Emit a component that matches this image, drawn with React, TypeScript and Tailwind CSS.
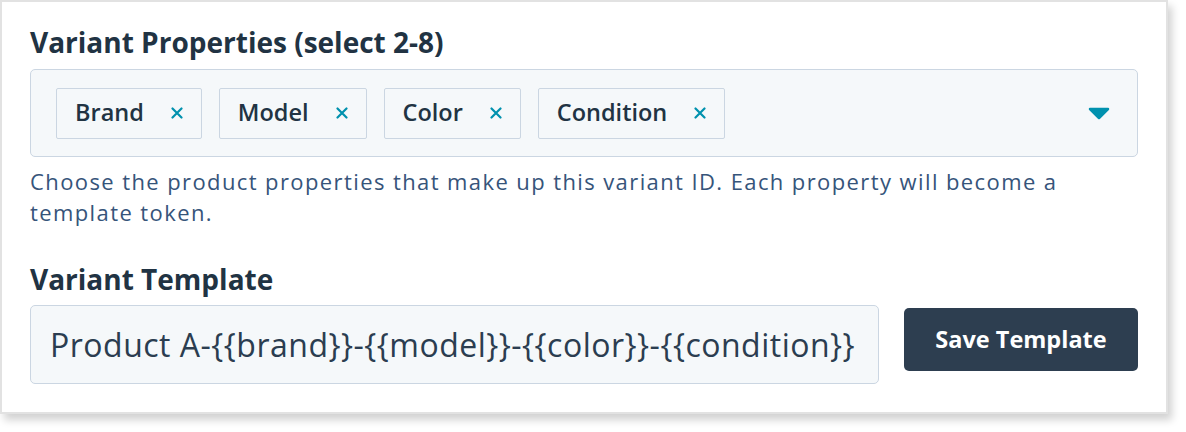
import React from "react";

const chips = ["Brand", "Model", "Color", "Condition"];

function XIcon() {
  return (
    <svg width="12" height="12" viewBox="0 0 12 12" className="ml-[27px] shrink-0">
      <path d="M1.5 1.5 L10.5 10.5 M10.5 1.5 L1.5 10.5" stroke="#0091ae" strokeWidth="2.2" strokeLinecap="round" />
    </svg>
  );
}

export default function App() {
  return (
    <div className="w-[1186px] h-[432px] bg-white" style={{ fontFamily: '"Open Sans", sans-serif' }}>
      <div className="w-[1168px] h-[414px] border-2 border-[#e2e2e2] bg-white shadow-[4px_6px_8px_rgba(0,0,0,0.18)] pl-[28px] pr-[28px] pt-[21px]">
        <h2 className="text-[28px] leading-[38px] font-bold text-[#213343]">Variant Properties (select 2-8)</h2>
        <div className="mt-[8px] h-[88px] rounded-[5px] border border-[#cbd6e2] bg-[#f5f8fa] flex items-center pl-[25px] pr-[27px]">
          <div className="flex gap-[17px] flex-1">
            {chips.map((c) => (
              <div key={c} className="h-[51px] flex items-center border border-[#cbd6e2] bg-[#f5f8fa] pl-[18px] pr-[18px] rounded-[2px]">
                <span className="text-[23.5px] font-semibold text-[#213343] leading-none">{c}</span>
                <XIcon />
              </div>
            ))}
          </div>
          <svg width="22" height="13" viewBox="0 0 22 13">
            <path d="M2 2 L20 2 L11 11 Z" fill="#0091ae" stroke="#0091ae" strokeWidth="2.5" strokeLinejoin="round" />
          </svg>
        </div>
        <p className="mt-[9px] text-[22px] leading-[31px] tracking-[1.4px] text-[#36547a]">
          Choose the product properties that make up this variant ID. Each property will become a template token.
        </p>
        <h2 className="mt-[32px] text-[28px] leading-[38px] font-bold text-[#213343]">Variant Template</h2>
        <div className="mt-[7px] flex items-start gap-[25px]">
          <div className="w-[849px] h-[79px] rounded-[5px] border border-[#cbd6e2] bg-[#f5f8fa] flex items-center pl-[19px]">
            <span className="text-[32px] tracking-[0.5px] text-[#2b3d50] whitespace-nowrap">Product A-{"{{brand}}"}-{"{{model}}"}-{"{{color}}"}-{"{{condition}}"}</span>
          </div>
          <button className="mt-[3px] w-[234px] h-[63px] rounded-[5px] bg-[#2d3e50] text-white text-[23.5px] font-bold">Save Template</button>
        </div>
      </div>
    </div>
  );
}
